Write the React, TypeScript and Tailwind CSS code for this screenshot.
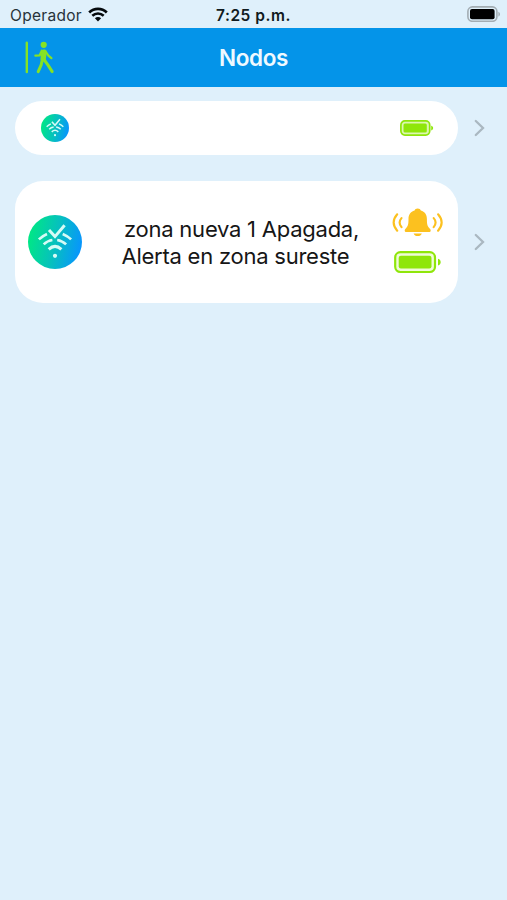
interface NodeItem {
  id: number;
  lines: string[];
  alert: boolean;
}

const nodes: NodeItem[] = [
  { id: 1, lines: [], alert: false },
  { id: 2, lines: ["zona nueva 1 Apagada,", "Alerta en zona sureste"], alert: true },
];

function WifiIcon() {
  return (
    <svg width="20" height="15" viewBox="0 0 20 15" className="mb-[2px] ml-[6px]" fill="none" stroke="#050a0d">
      <path d="M1.2 5.5C6.2.7 13.8.7 18.8 5.5" strokeWidth="2.7" />
      <path d="M4.3 8.8c3.3-3 8.1-3 11.4 0" strokeWidth="2.6" />
      <path d="M10 14.4 6.9 11.3c1.8-1.6 4.4-1.6 6.2 0Z" fill="#050a0d" stroke="none" />
    </svg>
  );
}

function PhoneBattery() {
  return (
    <svg width="34" height="16" viewBox="0 0 34 16">
      <rect x="0.9" y="0.9" width="29" height="14.4" rx="4.5" fill="none" stroke="#a3adb3" strokeWidth="1.6" />
      <rect x="3" y="3" width="24.6" height="10.2" rx="2" fill="#000" />
      <path d="M31.4 5.7c2.1.8 2.1 4 0 4.8Z" fill="#a3adb3" />
    </svg>
  );
}

function ExitIcon() {
  return (
    <svg width="31" height="34" viewBox="0 0 31 34" fill="none" stroke="#86e224" strokeLinecap="round" strokeLinejoin="round">
      <path d="M2.8 1.8v29.2" strokeWidth="2.4" />
      <circle cx="19.7" cy="3.8" r="3.1" fill="#86e224" stroke="none" />
      <path d="m20 11.2-.8 6.6" strokeWidth="5.4" />
      <path d="m17.8 9.8-2.2 4.6-4.2.2" strokeWidth="2.3" />
      <path d="m21.6 10.5 2.8 4.2 3 2.5" strokeWidth="2.2" />
      <path d="m18.3 19-1.2 5.2-2.9 6.4" strokeWidth="3" />
      <path d="m20.3 19 3.4 4.6 4.5 7" strokeWidth="3" />
    </svg>
  );
}

function NodeIcon({ size, id }: { size: number; id: string }) {
  return (
    <svg width={size} height={size} viewBox="0 0 54 54" fill="none">
      <defs>
        <linearGradient id={id} x1="0" y1="0.4" x2="1" y2="0.6">
          <stop offset="0" stopColor="#00e884" />
          <stop offset="0.5" stopColor="#06c1bd" />
          <stop offset="1" stopColor="#0894ff" />
        </linearGradient>
      </defs>
      <circle cx="27" cy="27" r="27" fill={`url(#${id})`} />
      <g stroke="#d5fbf6" strokeWidth="2.7">
        <path d="M10.9 24.4q3.7-3.6 8.1-5.5M34.7 18.9q4.8 2 8.4 5.5" />
        <path d="M15.7 29.4q3.6-3.6 8.7-4.4M29.2 25q5.2.8 8.9 4.4" />
        <path d="M20.7 34.4q6.3-6 12.7 0" strokeWidth="3" />
        <path d="m21 15 6 6.6 9.6-11.3" strokeWidth="3" />
      </g>
      <circle cx="27" cy="40.8" r="2.1" fill="#d5fbf6" />
    </svg>
  );
}

function NodeBattery({ large }: { large: boolean }) {
  if (large) {
    return (
      <svg width="48" height="23" viewBox="0 0 48 23">
        <rect x="1.2" y="1.2" width="39.8" height="19.8" rx="5.2" fill="#effbd9" stroke="#8fe60a" strokeWidth="2.2" />
        <rect x="4.7" y="4.8" width="32.8" height="12.7" rx="2.2" fill="#8fe60a" />
        <path d="M44 7.7c3.6 1.1 3.6 5.7 0 6.8Z" fill="#8fe60a" />
      </svg>
    );
  }
  return (
    <svg width="34" height="16" viewBox="0 0 34 16" className="mb-px">
      <rect x="0.9" y="0.9" width="28.8" height="14.2" rx="4" fill="#dcf7b0" stroke="#8fe60a" strokeWidth="1.7" />
      <rect x="3.5" y="3.6" width="23.3" height="8.9" rx="1.5" fill="#8fe60a" />
      <path d="M31.2 5.7c2.6.7 2.6 4 0 4.7Z" fill="#8fe60a" />
    </svg>
  );
}

function BellIcon() {
  return (
    <svg width="51" height="29" viewBox="0 0 51 29" fill="none" stroke="#fcc11f" strokeWidth="2.1" strokeLinecap="round">
      <path
        d="M25.7.4c-1.7 0-2.8.9-3.1 2.2-4 1.1-6.1 4.3-6.1 8.4 0 5.4-.6 7-2.3 9-1 1.1-1.5 1.6-1.5 2.5 0 1 .7 1.6 1.8 1.6h22.4c1.1 0 1.8-.6 1.8-1.6 0-.9-.5-1.4-1.5-2.5-1.7-2-2.3-3.6-2.3-9 0-4.1-2.1-7.3-6.1-8.4C28.5 1.3 27.4.4 25.7.4Z"
        fill="#fcc11f"
        stroke="none"
      />
      <path d="M21.6 25.4h8.2c-.7 3.4-7.5 3.4-8.2 0Z" fill="#fcc11f" stroke="none" />
      <path d="M5.2 6.3c-4.5 5.2-4.5 11.2 0 16.4M9.5 10.1c-2.6 3-2.6 5.8 0 9" />
      <path d="M46.1 6.3c4.5 5.2 4.5 11.2 0 16.4M41.7 10.1c2.6 3 2.6 5.8 0 9" />
    </svg>
  );
}

function Chevron() {
  return (
    <svg width="12" height="18" viewBox="0 0 12 18" fill="none" stroke="#aab8c1" strokeWidth="2.3">
      <path d="m1.8 2 7.2 7-7.2 7" strokeLinecap="round" />
    </svg>
  );
}

function NodeRow({ node }: { node: NodeItem }) {
  if (!node.alert) {
    return (
      <div className="flex items-center">
        <div className="flex h-[54px] w-[443px] items-center justify-between rounded-full bg-white pr-6 pl-[26px]">
          <NodeIcon size={28} id={`node-${node.id}`} />
          <NodeBattery large={false} />
        </div>
        <div className="ml-4">
          <Chevron />
        </div>
      </div>
    );
  }

  return (
    <div className="flex items-center">
      <div className="flex h-[122px] w-[443px] items-center rounded-[28px] bg-white pr-[15px] pl-[13px]">
        <NodeIcon size={54} id={`node-${node.id}`} />
        <div className="ml-[39px] flex-1 pt-px text-[22px] leading-[27px] tracking-[-0.24px] whitespace-nowrap text-[#161616]">
          <p className="pl-[3px]">{node.lines[0]}</p>
          <p className="pl-[0.5px]">{node.lines[1]}</p>
        </div>
        <div className="flex flex-col gap-3.5 pb-[2px]">
          <BellIcon />
          <div className="pl-[2px]">
            <NodeBattery large />
          </div>
        </div>
      </div>
      <div className="ml-4">
        <Chevron />
      </div>
    </div>
  );
}

export default function App() {
  return (
    <div className="h-[900px] w-[507px] overflow-hidden bg-[#dff0fb] font-['Inter',sans-serif]">
      <div className="grid h-7 grid-cols-3 items-center pt-[3px]">
        <div className="flex items-center pl-2.5 text-[15.5px] text-[#28333a]">
          <span className="tracking-[0.3px]">Operador</span>
          <WifiIcon />
        </div>
        <div className="text-center text-[15.5px] font-semibold tracking-[0.55px] text-[#101a20]">7:25 p.m.</div>
        <div className="flex justify-end pr-[6px] pb-[3px]">
          <PhoneBattery />
        </div>
      </div>

      <header className="grid h-[59px] grid-cols-3 items-center bg-[#0494e9]">
        <div className="pl-6">
          <ExitIcon />
        </div>
        <h1 className="text-center text-[22.5px] font-semibold tracking-[-0.35px] text-[#eff9ff]">Nodos</h1>
      </header>

      <main className="flex flex-col gap-[26px] pt-3.5 pl-[15px]">
        {nodes.map((node) => (
          <NodeRow key={node.id} node={node} />
        ))}
      </main>
    </div>
  );
}
